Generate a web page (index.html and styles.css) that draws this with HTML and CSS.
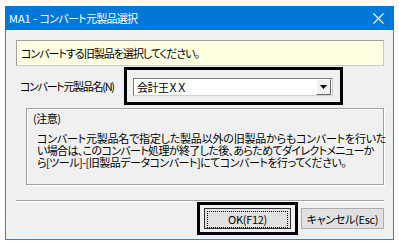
FILE: index.html
```html
<!DOCTYPE html>
<html lang="ja">
<head>
    <meta charset="UTF-8">
    <title>MA1 - コンバート元製品選択</title>
    <link rel="stylesheet" href="styles.css">
</head>
<body>
    <div class="window">
        <div class="titlebar">
            <span class="title"><span class="latin">MA1 - </span>コンバート元製品選択</span>
            <svg class="close" width="11" height="11" viewBox="0 0 11 11">
                <path d="M0.5 0.5 L10.5 10.5 M10.5 0.5 L0.5 10.5" stroke="#fff" stroke-width="1.1" fill="none"/>
            </svg>
        </div>
        <div class="content">
            <div class="info">コンバートする旧製品を選択してください。</div>

            <div class="product-row">
                <label class="product-label" for="product">コンバート元製品名(N)</label>
                <div class="focus-frame combo-frame">
                    <div class="combo" id="product">
                        <span class="combo-text">会計王ＸＸ</span>
                        <span class="combo-btn">
                            <svg width="7" height="4" viewBox="0 0 7 4"><path d="M0 0 H7 L3.5 4 Z" fill="#000"/></svg>
                        </span>
                    </div>
                </div>
            </div>

            <div class="note">
                <div class="note-head">(注意)</div>
                <p class="note-body">
                    <span class="line line-1">コンバート元製品名で指定した製品以外の旧製品からもコンバートを行いた</span>
                    <span class="line line-2">い場合は、このコンバート処理が終了した後、あらためてダイレクトメニューか</span>
                    <span class="line">ら[ツール]-[旧製品データコンバート]にてコンバートを行ってください。</span>
                </p>
            </div>

            <div class="separator"></div>

            <div class="buttons">
                <div class="focus-frame ok-frame">
                    <button type="button" class="btn btn-ok"><span class="focus-dots">OK(F12)</span></button>
                </div>
                <button type="button" class="btn btn-cancel">キャンセル(Esc)</button>
            </div>
        </div>
    </div>
</body>
</html>
```

FILE: styles.css
```css
body {
    margin: 0;
    background: #fff;
    font-family: "Noto Sans CJK JP", "Noto Sans", sans-serif;
    font-feature-settings: "palt";
    color: #000;
}
.window {
    margin: 6px 0 0 5px;
    width: 387px;
    height: 233px;
    border: 1px solid #2b87d8;
    border-top: none;
    background: #f0f0f0;
}
.titlebar {
    display: flex;
    align-items: center;
    justify-content: space-between;
    height: 24px;
    margin: 0 -1px;
    padding: 0 10px 0 4px;
    background: #0078d7;
    color: #fff;
    font-size: 11px;
    letter-spacing: -0.7px;
}
.title {
    line-height: 24px;
}
.latin {
    letter-spacing: 0;
}
.close {
    display: block;
}
.content {
    padding: 10px 9px 0 10px;
    font-size: 11px;
    letter-spacing: -0.5px;
}
.info {
    height: 24px;
    line-height: 24px;
    padding-left: 4px;
    background: #ffffe1;
    border: 1px solid #a0a0a0;
    border-right-color: #c8c8c8;
    border-bottom-color: #c8c8c8;
    letter-spacing: -1px;
}
.product-row {
    display: flex;
    align-items: center;
}
.product-label {
    flex: none;
    width: 108px;
    min-width: 0;
    padding-left: 4px;
    box-sizing: border-box;
    white-space: nowrap;
    letter-spacing: -1.3px;
}
.focus-frame {
    border: 3px solid #000;
}
.combo-frame {
    width: 200px;
    height: 24px;
    margin-top: 1px;
    padding: 8px 7px 0 6px;
}
.combo {
    display: flex;
    align-items: center;
    justify-content: space-between;
    height: 16px;
    padding: 0 1px 0 3px;
    background: #fff;
    border: 1px solid #7a7a7a;
    border-right-color: #d0d0d0;
    border-bottom-color: #d0d0d0;
}
.combo-text {
    line-height: 16px;
}
.combo-btn {
    display: flex;
    align-items: center;
    justify-content: center;
    width: 13px;
    height: 14px;
    background: #f0f0f0;
    border: 1px solid #fff;
    border-right-color: #696969;
    border-bottom-color: #696969;
}
.note {
    margin: 3px 0 0 10px;
    height: 74px;
    padding: 1px 0 0 6px;
    border: 1px solid #a0a0a0;
    box-shadow: inset 1px 1px 0 #fff, 1px 1px 0 #fff;
}
.note-head {
    line-height: 16px;
}
.note-body {
    margin: 6px 0 0 4px;
    line-height: 12px;
}
.line {
    display: block;
    white-space: nowrap;
}
.line-1 {
    letter-spacing: -0.2px;
}
.line-2 {
    letter-spacing: -0.65px;
}
.separator {
    margin-top: 15px;
    height: 1px;
    background: #a0a0a0;
    border-bottom: 1px solid #fff;
}
.buttons {
    display: flex;
    justify-content: flex-end;
    align-items: center;
    gap: 3px;
}
.ok-frame {
    padding: 3px 4px;
}
.btn {
    font-family: inherit;
    font-feature-settings: "palt";
    font-size: 11px;
    letter-spacing: -0.3px;
    height: 21px;
    padding: 0;
    background: #e1e1e1;
    border: 1px solid #adadad;
    color: #000;
}
.btn-ok {
    width: 87px;
    border-color: #333;
    padding: 2px;
}
.focus-dots {
    display: block;
    height: 15px;
    line-height: 15px;
    border: 1px dotted #000;
}
.btn-cancel {
    width: 83px;
}
```
